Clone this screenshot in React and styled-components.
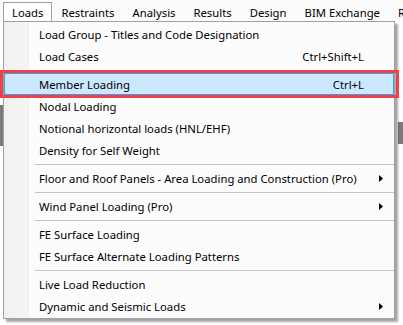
import React from "react";
import styled, { createGlobalStyle } from "styled-components";

const Global = createGlobalStyle`
  html, body { margin: 0; padding: 0; background: #ffffff; }
  body { font-family: "Noto Sans", "Open Sans", sans-serif; font-size: 11.3px; color: #000; }
`;

const Screen = styled.div`
  position: relative;
  width: 403px;
  height: 325px;
  overflow: hidden;
  background: #ffffff;
  display: flex;
  flex-direction: column;
`;

const MenuBar = styled.div`
  height: 21px;
  display: flex;
  align-items: flex-end;
  padding-left: 3px;
  background: #fbfbfb;
  flex: none;
  white-space: nowrap;
`;

const BarItem = styled.div`
  height: 19px;
  box-sizing: border-box;
  padding: 0 ${(p) => p.$pad}px;
  display: flex;
  align-items: center;
  white-space: nowrap;
  flex: none;
  color: #000;
  background: ${(p) => (p.$open ? "#ffffff" : "transparent")};
  border: 1px solid ${(p) => (p.$open ? "#a0a0a0" : "transparent")};
  border-bottom: none;
  position: relative;
  z-index: 3;
`;

const Content = styled.div`
  flex: 1;
  display: flex;
  justify-content: space-between;
  background: #ffffff;
`;

const SideStrip = styled.div`
  width: 5px;
  display: flex;
  flex-direction: column;
`;

const GrayBlock = styled.div`
  margin-top: ${(p) => p.$top}px;
  height: ${(p) => p.$h}px;
  width: 100%;
  background: #7a7a7a;
`;

const Menu = styled.div`
  position: absolute;
  left: 3px;
  top: 21px;
  width: 392px;
  box-sizing: border-box;
  border: 1px solid #a0a0a0;
  background: #fcfcfc;
  padding: 1px 0 1px 0;
  box-shadow: 3px 3px 2px rgba(0, 0, 0, 0.35);
  z-index: 2;
`;

const Gutter = styled.div`
  position: absolute;
  left: 0;
  top: 0;
  bottom: 0;
  width: 24px;
  background: linear-gradient(to right, #f1f1f1, #f5f5f5);
  border-right: 1px solid #ececec;
`;

const Item = styled.div`
  position: relative;
  height: 22px;
  box-sizing: border-box;
  display: flex;
  align-items: center;
  padding: 0 29px 0 34px;
  white-space: nowrap;
  border: 1px solid ${(p) => (p.$active ? "#3c9cf0" : "transparent")};
  background: ${(p) => (p.$active ? "#cce8ff" : "transparent")};
`;

const Label = styled.span`
  flex: 1;
`;

const Shortcut = styled.span`
  color: #000;
`;

const Arrow = styled.svg`
  position: absolute;
  right: 10px;
  top: 7px;
`;

const Separator = styled.div`
  height: 6px;
  display: flex;
  align-items: center;
  padding-left: 31px;
  &::after {
    content: "";
    flex: 1;
    height: 1px;
    background: #c5c5c5;
  }
`;

const Annotation = styled.div`
  position: absolute;
  left: 0;
  top: 70px;
  width: 399px;
  height: 28px;
  box-sizing: border-box;
  border: 3px solid #ef4146;
  z-index: 4;
  pointer-events: none;
`;

const bar = [
  ["Loads", true],
  ["Restraints"],
  ["Analysis"],
  ["Results"],
  ["Design"],
  ["BIM Exchange"],
  ["Reports"],
];

const menu = [
  { label: "Load Group - Titles and Code Designation" },
  { label: "Load Cases", shortcut: "Ctrl+Shift+L" },
  { sep: true },
  { label: "Member Loading", shortcut: "Ctrl+L", active: true },
  { label: "Nodal Loading" },
  { label: "Notional horizontal loads (HNL/EHF)" },
  { label: "Density for Self Weight" },
  { sep: true },
  { label: "Floor and Roof Panels - Area Loading and Construction (Pro)", sub: true },
  { sep: true },
  { label: "Wind Panel Loading (Pro)", sub: true },
  { sep: true },
  { label: "FE Surface Loading" },
  { label: "FE Surface Alternate Loading Patterns" },
  { sep: true },
  { label: "Live Load Reduction" },
  { label: "Dynamic and Seismic Loads", sub: true },
];

export default function App() {
  return (
    <Screen>
      <Global />
      <MenuBar>
        {bar.map(([t, open]) => (
          <BarItem key={t} $open={open} $pad={8}>
            {t}
          </BarItem>
        ))}
      </MenuBar>
      <Content>
        <SideStrip>
          <GrayBlock $top={84} $h={41} />
        </SideStrip>
        <SideStrip>
          <GrayBlock $top={101} $h={22} />
        </SideStrip>
      </Content>
      <Menu>
        <Gutter />
        {menu.map((m, i) =>
          m.sep ? (
            <Separator key={i} />
          ) : (
            <Item key={i} $active={m.active}>
              <Label>{m.label}</Label>
              {m.shortcut && <Shortcut>{m.shortcut}</Shortcut>}
              {m.sub && (
                <Arrow width="4" height="7" viewBox="0 0 4 7">
                  <path d="M0 0 L4 3.5 L0 7 Z" fill="#000" />
                </Arrow>
              )}
            </Item>
          )
        )}
      </Menu>
      <Annotation />
    </Screen>
  );
}
